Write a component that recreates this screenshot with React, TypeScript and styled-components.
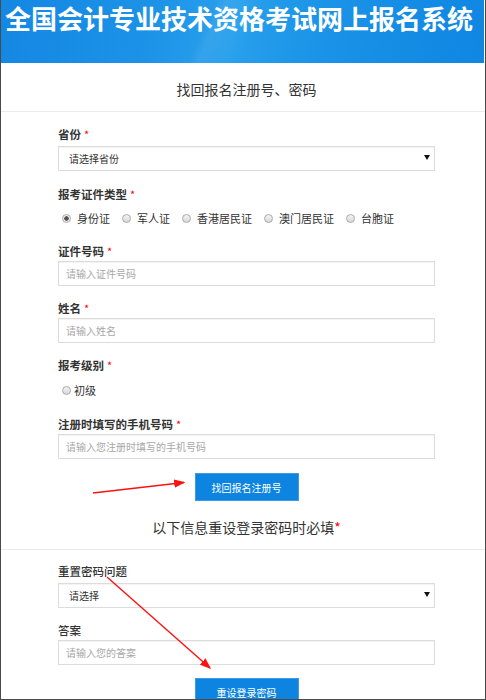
import React from 'react';
import styled, { createGlobalStyle } from 'styled-components';

const GlobalStyle = createGlobalStyle`
  html, body {
    margin: 0;
    padding: 0;
    background: #ffffff;
  }
  body {
    font-family: 'Noto Sans CJK SC', 'Noto Sans', sans-serif;
    color: #333333;
  }
  * {
    box-sizing: border-box;
  }
`;

type FieldDef = {
  label: string;
  required?: boolean;
  bold?: boolean;
  kind: 'select' | 'input' | 'radio';
  value?: string;
  options?: string[];
  mt: number;
};

const topFields: FieldDef[] = [
  { label: '省份', required: true, bold: true, kind: 'select', value: '请选择省份', mt: 13 },
  {
    label: '报考证件类型',
    required: true,
    bold: true,
    kind: 'radio',
    options: ['身份证', '军人证', '香港居民证', '澳门居民证', '台胞证'],
    mt: 14
  },
  { label: '证件号码', required: true, bold: true, kind: 'input', value: '请输入证件号码', mt: 15 },
  { label: '姓名', required: true, bold: true, kind: 'input', value: '请输入姓名', mt: 13 },
  { label: '报考级别', required: true, bold: true, kind: 'radio', options: ['初级'], mt: 13 },
  {
    label: '注册时填写的手机号码',
    required: true,
    bold: true,
    kind: 'input',
    value: '请输入您注册时填写的手机号码',
    mt: 16
  }
];

const bottomFields: FieldDef[] = [
  { label: '重置密码问题', kind: 'select', value: '请选择', mt: 12 },
  { label: '答案', kind: 'input', value: '请输入您的答案', mt: 13 }
];

function FieldBlock({ field }: { field: FieldDef }) {
  const opts = field.options || [];
  const single = opts.length === 1;
  return (
    <Field $mt={field.mt}>
      <Label $bold={!!field.bold}>
        {field.label}
        {field.required && <Star>*</Star>}
      </Label>
      {field.kind === 'select' && (
        <SelectWrap>
          <Select defaultValue=''>
            <option value=''>{field.value}</option>
          </Select>
        </SelectWrap>
      )}
      {field.kind === 'input' && <Input placeholder={field.value} />}
      {field.kind === 'radio' && (
        <RadioRow $single={single}>
          {opts.map((opt, i) => (
            <RadioItem key={opt} $single={single}>
              <Dot $checked={i === 0 && !single} />
              {opt}
            </RadioItem>
          ))}
        </RadioRow>
      )}
    </Field>
  );
}

export default function App() {
  return (
    <>
      <GlobalStyle />
      <Frame>
        <Header>
          <SiteTitle>全国会计专业技术资格考试网上报名系统</SiteTitle>
        </Header>

        <Section>
          <Column>
            <Heading>找回报名注册号、密码</Heading>
          </Column>
        </Section>

        <Section>
          <Column>
            {topFields.map((f) => (
              <FieldBlock key={f.label} field={f} />
            ))}
            <ButtonRow $mt={14}>
              <Button>找回报名注册号</Button>
            </ButtonRow>
            <SubHeading>
              以下信息重设登录密码时必填<BigStar>*</BigStar>
            </SubHeading>
          </Column>
        </Section>

        <Column>
          {bottomFields.map((f) => (
            <FieldBlock key={f.label} field={f} />
          ))}
          <ButtonRow $mt={13}>
            <Button>重设登录密码</Button>
          </ButtonRow>
        </Column>

        <Annotations width='486' height='700' viewBox='0 0 486 700'>
          <defs>
            <marker id='head' markerWidth='8' markerHeight='6' refX='7' refY='3' orient='auto'>
              <path d='M0 0 L8 3 L0 6 Z' fill='#ff1010' />
            </marker>
          </defs>
          <line x1='93' y1='493' x2='184' y2='482.5' stroke='#ff1010' strokeWidth='1.4' markerEnd='url(#head)' />
          <line x1='107' y1='577' x2='210' y2='668' stroke='#ff1010' strokeWidth='1.4' markerEnd='url(#head)' />
        </Annotations>
      </Frame>
    </>
  );
}

const Frame = styled.div`
  position: relative;
  width: 486px;
  height: 700px;
  border: 1px solid #4a4a4a;
  border-top: 0;
  overflow: hidden;
  background: #ffffff;
`;

const Header = styled.div`
  height: 63px;
  margin-right: 1px;
  background:
    linear-gradient(115deg, transparent 0%, transparent 42%, rgba(255, 255, 255, 0.07) 44%, transparent 52%, transparent 100%),
    linear-gradient(100deg, #1487e3 0%, #1c92e7 30%, #28a0ec 48%, #1b93e7 66%, #0f86e2 100%);
  overflow: hidden;
`;

const SiteTitle = styled.div`
  font-family: 'Noto Sans CJK SC', sans-serif;
  font-size: 26px;
  font-weight: 700;
  line-height: 36px;
  color: #ffffff;
  white-space: nowrap;
  padding-left: 4px;
`;

const Section = styled.div`
  border-bottom: 1px solid #ececec;
`;

const Column = styled.div`
  width: 377px;
  margin-left: 57px;
  display: flex;
  flex-direction: column;
`;

const Heading = styled.div`
  font-size: 14px;
  line-height: 20px;
  color: #333333;
  text-align: center;
  padding: 16px 0 12px;
`;

const SubHeading = styled.div`
  font-size: 14px;
  line-height: 20px;
  color: #333333;
  text-align: center;
  margin-top: 16px;
  padding-bottom: 12px;
`;

const Field = styled.div<{ $mt: number }>`
  display: flex;
  flex-direction: column;
  margin-top: ${(p) => p.$mt}px;
`;

const Label = styled.div<{ $bold: boolean }>`
  font-size: 11.5px;
  line-height: 18px;
  font-weight: ${(p) => (p.$bold ? 700 : 500)};
  color: #333333;
  margin-bottom: 1px;
`;

const Star = styled.span`
  color: #ff0000;
  font-weight: 400;
  margin-left: 3px;
  font-size: 11px;
`;

const BigStar = styled.span`
  color: #ff0000;
  font-size: 14px;
`;

const SelectWrap = styled.div`
  position: relative;
  &::after {
    content: '';
    position: absolute;
    right: 5px;
    top: 11px;
    border-left: 3px solid transparent;
    border-right: 3px solid transparent;
    border-top: 5px solid #111111;
  }
`;

const Select = styled.select`
  appearance: none;
  width: 100%;
  height: 25px;
  border: 1px solid #dcdcdc;
  border-radius: 0;
  background: #ffffff;
  box-shadow: inset 0 1px 1px rgba(0, 0, 0, 0.05);
  font-family: 'Noto Sans CJK SC', sans-serif;
  font-size: 10px;
  color: #333333;
  padding: 0 0 0 10px;
  outline: none;
`;

const Input = styled.input`
  width: 100%;
  height: 25px;
  border: 1px solid #dcdcdc;
  border-radius: 0;
  box-shadow: inset 0 1px 1px rgba(0, 0, 0, 0.05);
  font-family: 'Noto Sans CJK SC', sans-serif;
  font-size: 10px;
  padding: 0 0 0 7px;
  outline: none;
  &::placeholder {
    color: #a8a8a8;
  }
`;

const RadioRow = styled.div<{ $single: boolean }>`
  display: flex;
  align-items: center;
  gap: 12px;
  margin-top: ${(p) => (p.$single ? 6 : 5)}px;
  padding-left: 4px;
`;

const RadioItem = styled.label<{ $single: boolean }>`
  display: flex;
  align-items: center;
  gap: ${(p) => (p.$single ? 3 : 6)}px;
  font-size: 11px;
  line-height: 18px;
  color: #333333;
`;

const Dot = styled.span<{ $checked: boolean }>`
  width: 9px;
  height: 9px;
  border-radius: 50%;
  border: 1px solid #a9a9a9;
  background: ${(p) =>
    p.$checked
      ? 'radial-gradient(circle, #555555 0 2px, #f2f2f2 2.5px)'
      : 'linear-gradient(#f4f4f4, #d8d8d8)'};
`;

const ButtonRow = styled.div<{ $mt: number }>`
  display: flex;
  justify-content: center;
  margin-top: ${(p) => p.$mt}px;
`;

const Button = styled.button`
  width: 104px;
  height: 28px;
  border: 1px solid #3d9be6;
  border-radius: 0;
  background: #0c84e0;
  color: #ffffff;
  font-family: 'Noto Sans CJK SC', sans-serif;
  font-size: 10px;
  cursor: pointer;
`;

const Annotations = styled.svg`
  position: absolute;
  left: -1px;
  top: 0;
  pointer-events: none;
`;
